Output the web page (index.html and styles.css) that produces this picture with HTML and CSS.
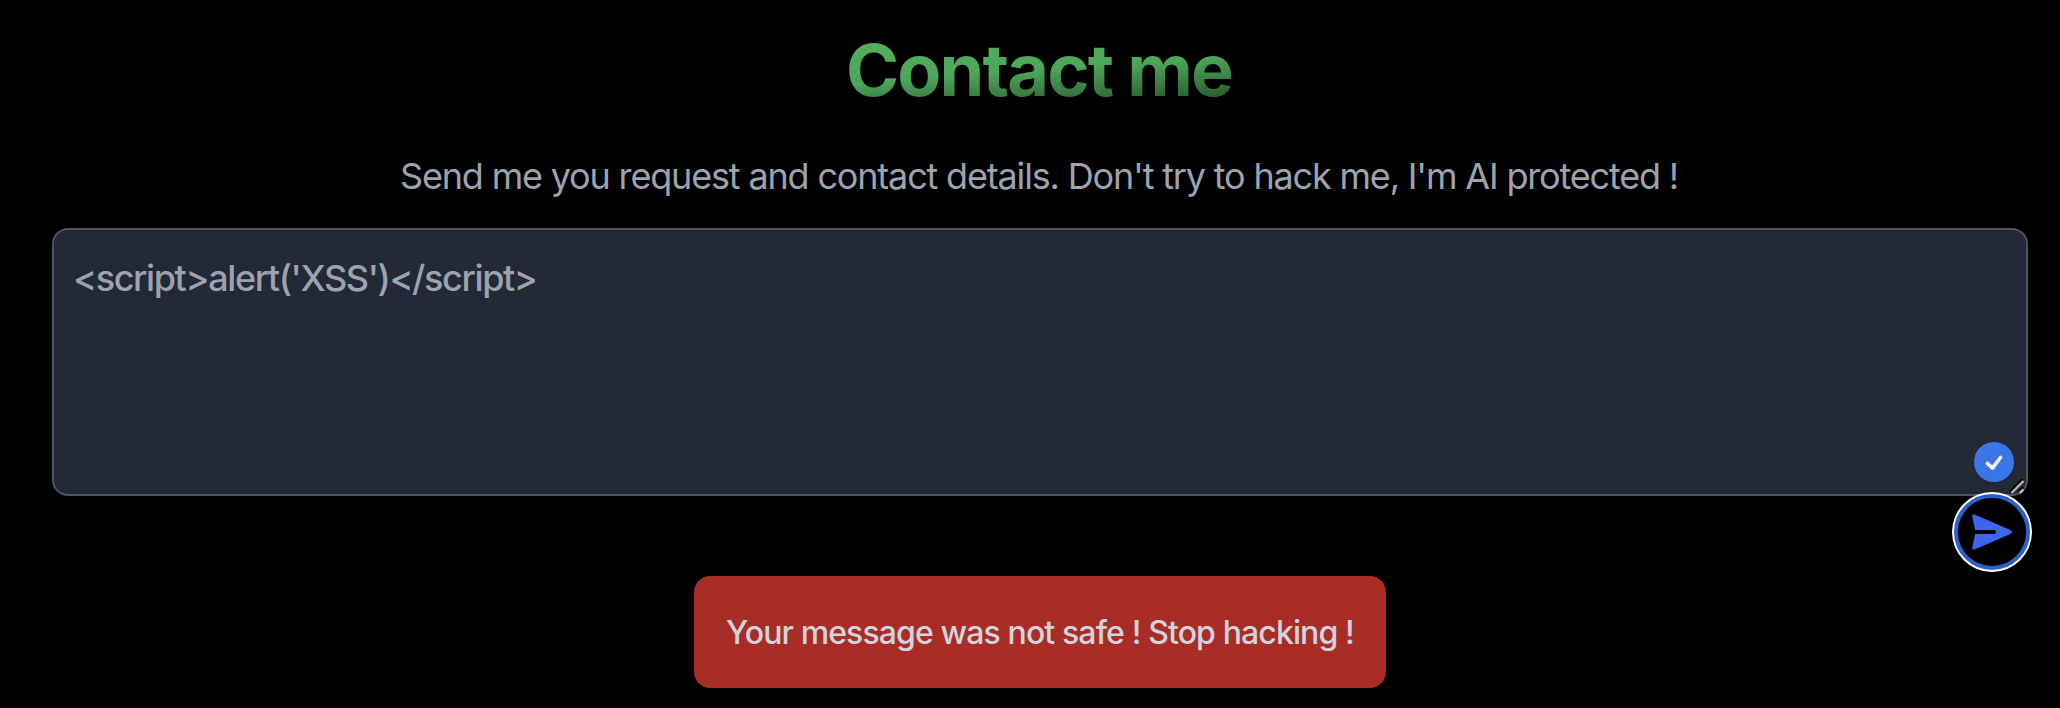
FILE: index.html
```html
<!DOCTYPE html>
<html lang="en">
<head>
<meta charset="utf-8">
<title>Contact me</title>
<link rel="stylesheet" href="styles.css">
</head>
<body>
<main class="contact">
  <h1 class="title"><span class="title-text">Contact me</span></h1>
  <p class="intro"><span class="intro-text">Send me you request and contact details. Don't try to hack me, I'm AI protected !</span></p>
  <form class="form">
    <div class="field">
      <textarea class="message" spellcheck="false">&lt;script&gt;alert('XSS')&lt;/script&gt;</textarea>
      <svg class="badge" viewBox="0 0 40 40"><circle cx="20" cy="20" r="20" fill="#3b76e8"/><path d="M13.500 21.500l5 4.500 8-10.500" fill="none" stroke="#fff" stroke-width="3.600" stroke-linecap="round" stroke-linejoin="round"/></svg>
      <svg class="grip" viewBox="0 0 16 16"><path d="M0 12.500L12.500 0M8 13L13.500 8" fill="none" stroke="#000" stroke-width="2"/><path d="M1.500 14L13.500 2M9.500 14L13.500 10.500" fill="none" stroke="#b4b6ba" stroke-width="2.400"/></svg>
    </div>
    <button class="send" type="button" aria-label="Send">
      <svg class="plane" viewBox="0 0 40 36"><path d="M2 .2L38.500 16Q41.500 18 38.500 20L2 35.800Q-.5 36 .2 33.500L3.200 20H22Q24 20 24 18T22 16H3.200L.2 2.500Q-.5 0 2 .2Z" fill="#3b66e8"/></svg>
    </button>
  </form>
  <div class="alert"><span class="alert-text">Your message was not safe ! Stop hacking !</span></div>
</main>
</body>
</html>
```
FILE: styles.css
```css
body {
  margin: 0;
  background: #000;
  font-family: Inter, "Liberation Sans", sans-serif;
}
.contact {
  box-sizing: border-box;
  height: 708px;
  padding: 30px 32px 0 52px;
  display: flex;
  flex-direction: column;
  align-items: center;
  overflow: hidden;
}
.title {
  margin: 0 2px 0 0;
  font-size: 72px;
  line-height: 79px;
  font-weight: 700;
}
.title-text {
  display: block;
  letter-spacing: -1.9px;
  color: transparent;
  background: linear-gradient(176deg, #54b05e 0%, #4ea658 50%, #1f4626 100%);
  background-clip: text;
  -webkit-background-clip: text;
}
.intro {
  margin: 47px 2px 0 0;
  font-size: 36px;
  line-height: 40px;
  color: #9ca3af;
  white-space: nowrap;
}
.intro-text { letter-spacing: -1.17px; }
.form {
  margin-top: 32px;
  align-self: stretch;
  display: flex;
  flex-direction: column;
  align-items: flex-end;
}
.field {
  position: relative;
  width: 100%;
  height: 268px;
}
.message {
  display: block;
  box-sizing: border-box;
  width: 1976px;
  height: 268px;
  padding: 28px 19px;
  border: 2px solid #4b5563;
  border-radius: 16px;
  background: #232936;
  color: #9ca3af;
  font: 500 36px/40px Inter, "Liberation Sans", sans-serif;
  letter-spacing: -1.38px;
  resize: none;
  outline: none;
}
.badge {
  position: absolute;
  right: 14px;
  bottom: 14px;
  width: 40px;
  height: 40px;
}
.grip {
  position: absolute;
  right: 2px;
  bottom: 1px;
  width: 16px;
  height: 16px;
}
.send {
  position: relative;
  box-sizing: border-box;
  width: 76px;
  height: 76px;
  margin: -2px -2px 0 0;
  padding: 0;
  display: flex;
  align-items: center;
  justify-content: center;
  border: 4px solid #2c5fcb;
  border-radius: 50%;
  background: #000;
  box-shadow: 0 0 0 2px #fff;
}
.plane {
  width: 40px;
  height: 36px;
}
.alert {
  box-sizing: border-box;
  width: 692px;
  height: 112px;
  margin-top: 6px;
  display: flex;
  align-items: center;
  justify-content: center;
  border-radius: 16px;
  background: #a92d27;
  color: #d1d5db;
  font-size: 32px;
  font-weight: 500;
  white-space: nowrap;
}
.alert-text { letter-spacing: -0.88px; }
```
